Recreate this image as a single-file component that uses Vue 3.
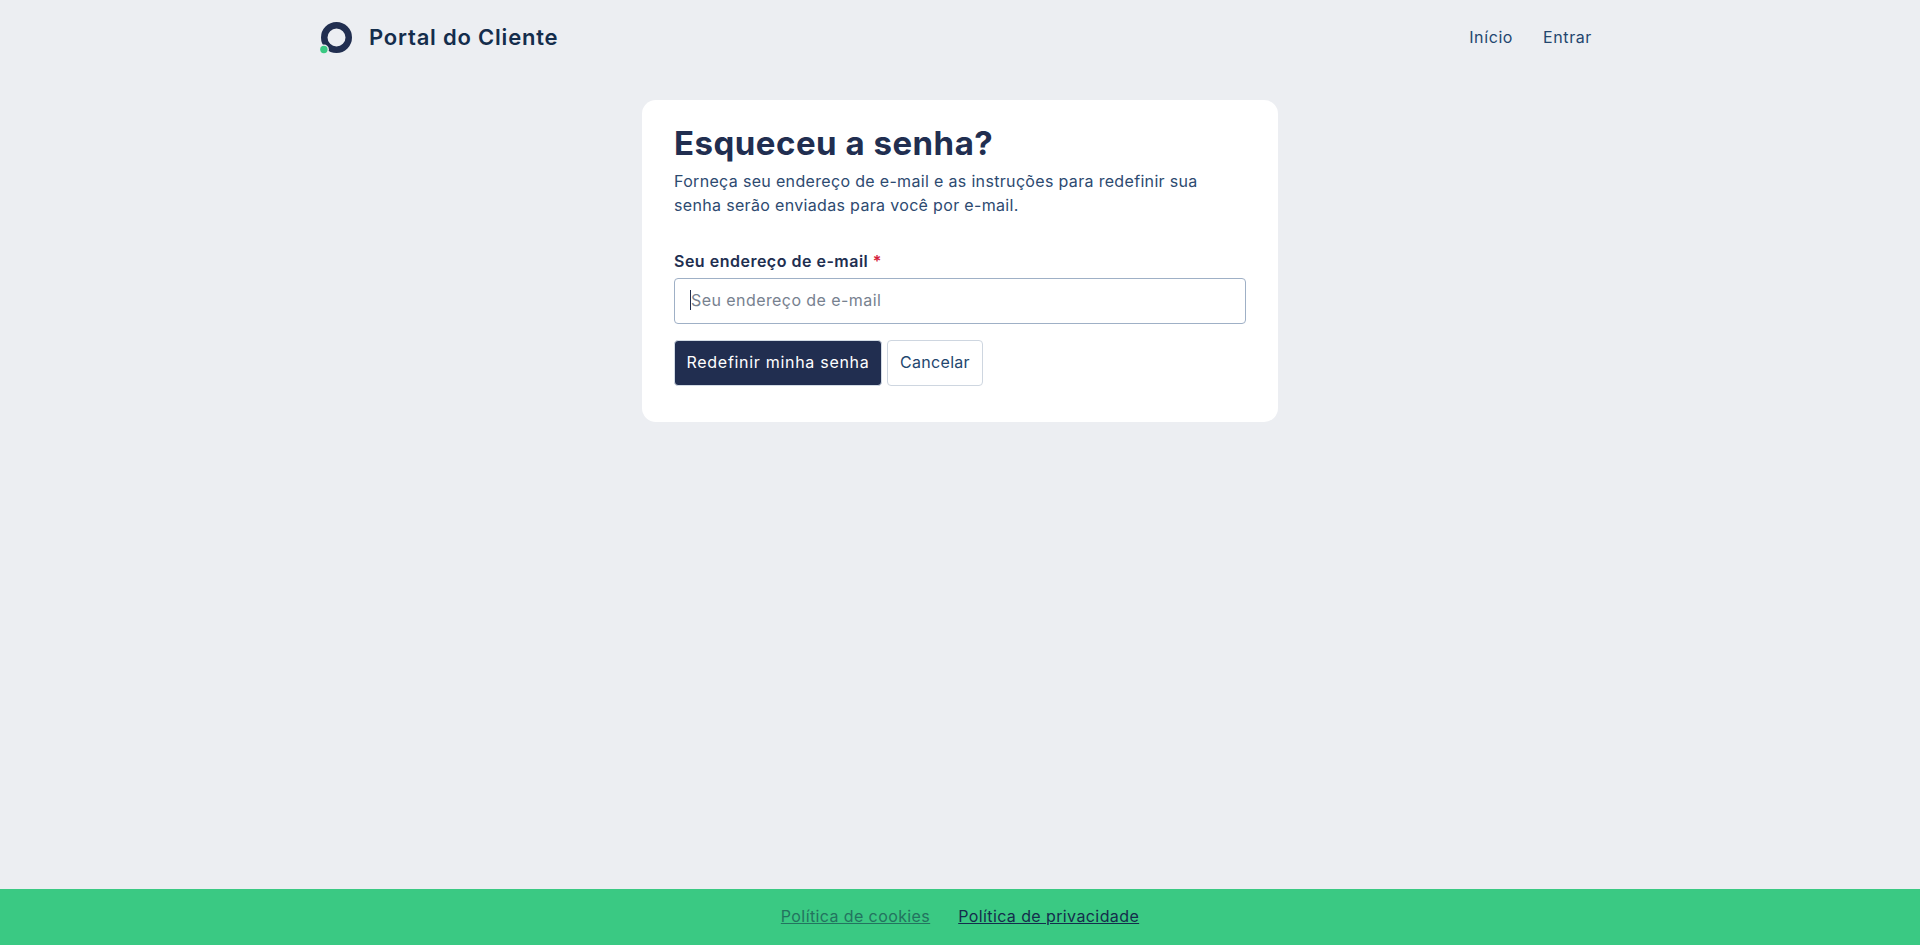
<script setup>
const footerLinks = [
  { label: 'Política de cookies', muted: true },
  { label: 'Política de privacidade', muted: false },
];
</script>

<template>
  <div class="page">
    <header class="topbar">
      <a class="brand" href="#">
        <svg class="brand-logo" width="34" height="34" viewBox="0 0 34 34">
          <circle cx="16.5" cy="17.5" r="12.25" fill="none" stroke="#212e50" stroke-width="6.5" />
          <circle cx="3.9" cy="29.5" r="5" fill="#eceef2" />
          <circle cx="3.9" cy="29.5" r="3.7" fill="#3ac983" />
        </svg>
        <span class="brand-name">Portal do Cliente</span>
      </a>
      <nav class="nav">
        <a href="#">Início</a>
        <a href="#">Entrar</a>
      </nav>
    </header>

    <main class="content">
      <section class="card">
        <h1>Esqueceu a senha?</h1>
        <p class="intro">
          Forneça seu endereço de e-mail e as instruções para redefinir sua
          senha serão enviadas para você por e-mail.
        </p>

        <form class="form" @submit.prevent>
          <label for="email">Seu endereço de e-mail <span class="required">*</span></label>
          <div class="field">
            <input id="email" type="email" placeholder="Seu endereço de e-mail" />
            <span class="caret"></span>
          </div>
          <div class="actions">
            <button class="btn btn-primary" type="submit">Redefinir minha senha</button>
            <button class="btn btn-light" type="button">Cancelar</button>
          </div>
        </form>
      </section>
    </main>

    <footer class="footer">
      <a
        v-for="link in footerLinks"
        :key="link.label"
        href="#"
        :class="{ muted: link.muted }"
      >{{ link.label }}</a>
    </footer>
  </div>
</template>

<style>
html,
body {
  margin: 0;
  background: #eceef2;
}
</style>

<style scoped>
.page {
  display: flex;
  flex-direction: column;
  min-height: 945px;
  background: #eceef2;
  font-family: Inter, "Open Sans", sans-serif;
  color: #212e50;
}

.topbar {
  display: flex;
  align-items: center;
  justify-content: space-between;
  width: 1272px;
  height: 74px;
  margin-left: 320px;
}

.brand {
  display: flex;
  align-items: center;
  gap: 15px;
  text-decoration: none;
}

.brand-name {
  font-size: 22px;
  font-weight: 600;
  letter-spacing: 0.8px;
  color: #142d4c;
}

.nav {
  display: flex;
  gap: 30px;
}

.nav a {
  font-size: 16px;
  letter-spacing: 0.6px;
  color: #23466e;
  text-decoration: none;
}

.content {
  flex: 1;
  padding-top: 26px;
}

.card {
  box-sizing: border-box;
  width: 636px;
  height: 322px;
  margin: 0 auto;
  padding: 23px 32px 0;
  background: #fff;
  border-radius: 14px;
}

h1 {
  margin: 0;
  font-size: 33px;
  line-height: 40px;
  font-weight: 700;
  letter-spacing: 0.5px;
  color: #212e50;
}

.intro {
  max-width: 540px;
  margin: 6px 0 0;
  font-size: 16px;
  line-height: 24px;
  letter-spacing: 0.33px;
  color: #2d4a70;
}

.form {
  margin-top: 33px;
}

label {
  display: block;
  font-size: 16px;
  line-height: 22px;
  font-weight: 600;
  letter-spacing: 0.5px;
  color: #212e50;
}

.required {
  color: #d5213a;
}

.field {
  position: relative;
  margin-top: 6px;
}

input {
  display: block;
  box-sizing: border-box;
  width: 100%;
  height: 46px;
  padding: 0 16px 2px;
  border: 1px solid #9fb0c6;
  border-radius: 4px;
  background: #fff;
  font: inherit;
  font-size: 16px;
  letter-spacing: 0.43px;
  outline: none;
}

input::placeholder {
  color: #77818f;
  opacity: 1;
}

.caret {
  position: absolute;
  left: 16px;
  top: 12px;
  width: 1px;
  height: 20px;
  background: #212e50;
}

.actions {
  display: flex;
  gap: 5px;
  margin-top: 16px;
}

.btn {
  box-sizing: border-box;
  height: 46px;
  padding: 0 10px 2px;
  border-radius: 4px;
  font: inherit;
  font-size: 16px;
  cursor: pointer;
}

.btn-primary {
  width: 208px;
  border: 1px solid #d3dbe5;
  background: #212e50;
  color: #fff;
  letter-spacing: 0.7px;
}

.btn-light {
  width: 96px;
  border: 1px solid #ced6e0;
  background: #fff;
  color: #23466e;
  letter-spacing: 0.3px;
}

.footer {
  box-sizing: border-box;
  display: flex;
  align-items: center;
  justify-content: center;
  gap: 28px;
  height: 56px;
  padding-bottom: 2px;
  background: #3ac983;
}

.footer a {
  font-size: 16px;
  letter-spacing: 0.4px;
  color: #142d4c;
  text-decoration: underline;
}

.footer a.muted {
  color: #23735f;
}
</style>
